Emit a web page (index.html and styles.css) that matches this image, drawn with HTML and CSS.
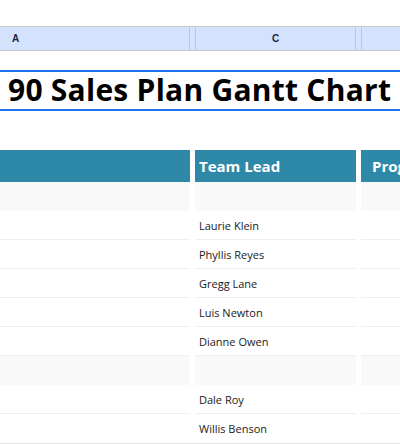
FILE: index.html
```html
<!DOCTYPE html>
<html lang="en">
<head>
    <meta charset="UTF-8">
    <meta name="viewport" content="width=device-width, initial-scale=1.0">
    <title>90 Sales Plan Gantt Chart</title>
    <link rel="stylesheet" href="styles.css">
</head>
<body>
    <!-- spreadsheet column letters -->
    <div class="colBar">
        <div class="colHead colA">A</div>
        <div class="colHead colB"></div>
        <div class="colHead colC">C</div>
        <div class="colHead colD"></div>
        <div class="colHead colE"></div>
    </div>

    <div class="title">90 Sales Plan Gantt Chart</div>

    <div class="sheet">
        <div class="row headRow">
            <div class="cell wide"></div>
            <div class="cell lead">Team Lead</div>
            <div class="cell prog">Progress</div>
        </div>
        <div class="row groupRow">
            <div class="cell wide"></div><div class="cell lead"></div><div class="cell prog"></div>
        </div>
        <div class="row">
            <div class="cell wide"></div><div class="cell lead">Laurie Klein</div><div class="cell prog"></div>
        </div>
        <div class="row">
            <div class="cell wide"></div><div class="cell lead">Phyllis Reyes</div><div class="cell prog"></div>
        </div>
        <div class="row">
            <div class="cell wide"></div><div class="cell lead">Gregg Lane</div><div class="cell prog"></div>
        </div>
        <div class="row">
            <div class="cell wide"></div><div class="cell lead">Luis Newton</div><div class="cell prog"></div>
        </div>
        <div class="row">
            <div class="cell wide"></div><div class="cell lead">Dianne Owen</div><div class="cell prog"></div>
        </div>
        <div class="row groupRow">
            <div class="cell wide"></div><div class="cell lead"></div><div class="cell prog"></div>
        </div>
        <div class="row">
            <div class="cell wide"></div><div class="cell lead">Dale Roy</div><div class="cell prog"></div>
        </div>
        <div class="row lastRow">
            <div class="cell wide"></div><div class="cell lead">Willis Benson</div><div class="cell prog"></div>
        </div>
    </div>
    <div class="sheetEnd"></div>
</body>
</html>
```

FILE: styles.css
```css
*{
    box-sizing: border-box;
}
body{
    margin: 0;
    font-family: "Open Sans", sans-serif;
    background: #fff;
    overflow: hidden;
}
.colBar{
    margin-top: 26px;
    display: flex;
    height: 25px;
    background: #d3e3fd;
    border-top: 1px solid #c4c7c5;
    border-bottom: 1px solid #c4c7c5;
}
.colHead{
    border-right: 1px solid #c4c7c5;
    font-family: "Liberation Sans", Arial, sans-serif;
    font-size: 10px;
    font-weight: bold;
    color: #1f1f3f;
    line-height: 23px;
}
.colA{
    width: 190px;
    padding-left: 12px;
}
.colB{
    width: 6px;
}
.colC{
    width: 160px;
    text-align: center;
}
.colD{
    width: 6px;
}
.colE{
    flex: 1;
    border-right: none;
}
.title{
    margin-top: 19px;
    height: 41px;
    border-top: 2px solid #1a73e8;
    border-bottom: 2px solid #1a73e8;
    padding-left: 8px;
    font-size: 30px;
    font-weight: bold;
    letter-spacing: 0.25px;
    line-height: 36px;
    color: #000;
    white-space: nowrap;
}
.sheet{
    margin-top: 39px;
}
.row{
    display: grid;
    grid-template-columns: 190px 161px 1fr;
    column-gap: 5px;
    height: 29px;
}
.cell{
    border-bottom: 1px solid #efefef;
    font-size: 11px;
    color: #1a1a1a;
    display: flex;
    align-items: center;
    padding-left: 4px;
}
.headRow{
    height: 32px;
}
.headRow .cell{
    background: #2e89a9;
    color: #fff;
    font-size: 15px;
    font-weight: bold;
    border-bottom: none;
}
.headRow .prog{
    padding-left: 11px;
    overflow: hidden;
    white-space: nowrap;
}
.groupRow{
    height: 29px;
}
.groupRow .cell{
    background: #f9f9f9;
    border-bottom: none;
}
.lastRow .cell{
    border-bottom: none;
}
.sheetEnd{
    height: 2px;
    background: #e0e0e0;
}
```
